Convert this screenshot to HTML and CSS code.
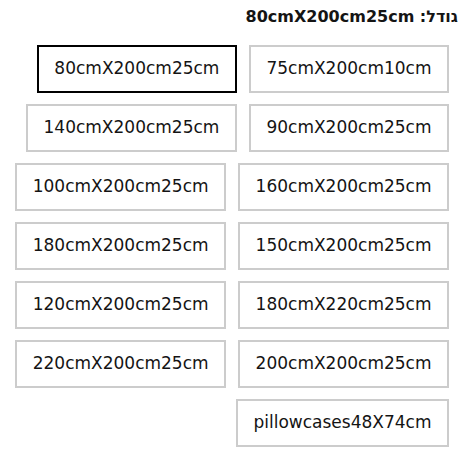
FILE: index.html
```html
<!DOCTYPE html>
<html lang="he" dir="rtl">
<head>
<meta charset="utf-8">
<link rel="stylesheet" href="styles.css">
</head>
<body>
<div class="size-picker">
  <div class="size-title">גודל: <span class="size-value">80cmX200cm25cm</span></div>
  <div class="size-options">
    <button class="size-option">75cmX200cm10cm</button>
    <button class="size-option is-selected">80cmX200cm25cm</button>
    <button class="size-option">90cmX200cm25cm</button>
    <button class="size-option">140cmX200cm25cm</button>
    <button class="size-option">160cmX200cm25cm</button>
    <button class="size-option">100cmX200cm25cm</button>
    <button class="size-option">150cmX200cm25cm</button>
    <button class="size-option">180cmX200cm25cm</button>
    <button class="size-option">180cmX220cm25cm</button>
    <button class="size-option">120cmX200cm25cm</button>
    <button class="size-option">200cmX200cm25cm</button>
    <button class="size-option">220cmX200cm25cm</button>
    <button class="size-option">pillowcases48X74cm</button>
  </div>
</div>
</body>
</html>
```

FILE: styles.css
```css
html, body {
  margin: 0;
  padding: 0;
  background: #fff;
}

body {
  font-family: "DejaVu Sans", sans-serif;
  color: #141414;
}

.size-picker {
  padding: 7px 0 0 0;
}

.size-title {
  font-weight: bold;
  font-size: 16px;
  line-height: 20px;
  padding-right: 4px;
  margin-bottom: 18px;
}

.size-options {
  display: flex;
  flex-wrap: wrap;
  gap: 11px 12px;
  padding-right: 13px;
}

.size-option {
  font-family: "DejaVu Sans", sans-serif;
  font-size: 17px;
  line-height: 20px;
  color: #141414;
  background: #fff;
  border: 2px solid #cccccc;
  padding: 11px 15.5px 13px;
  margin: 0;
  height: 48px;
  box-sizing: border-box;
  white-space: nowrap;
  cursor: pointer;
}

.size-option.is-selected {
  border-color: #000;
}
```
